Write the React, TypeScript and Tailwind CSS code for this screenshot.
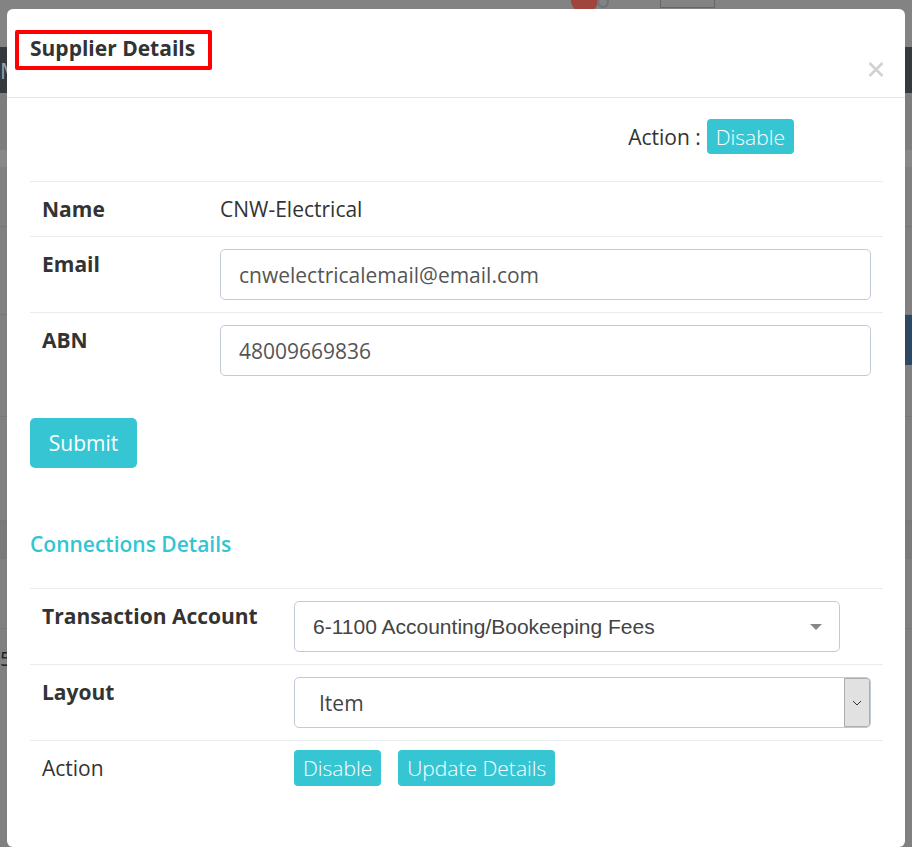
import React from "react";

const font = { fontFamily: '"Open Sans", "Noto Sans", sans-serif' };

function TealBtn({ children, className = "" }: { children: React.ReactNode; className?: string }) {
  return (
    <span
      className={`inline-flex items-center justify-center bg-[#36c6d3] text-white text-[21px] leading-[30px] rounded-[4px] ${className}`}
    >
      {children}
    </span>
  );
}

export default function App() {
  return (
    <div className="relative w-[912px] h-[847px] overflow-hidden bg-[#808080]" style={font}>
      {/* dimmed page behind the modal */}
      <div className="flex flex-col w-full">
        <div className="relative h-[47px] bg-[#838383]">
          <div className="absolute left-[571px] top-[-13px] w-[27px] h-[26px] rounded-full bg-[#9f453d]" />
          <div className="absolute left-[597px] top-[-4px] w-[12px] h-[12px] rounded-full border-2 border-[#6d7479]" />
          <div className="absolute left-[660px] top-[-2px] w-[55px] h-[10px] border border-[#666] border-t-0" />
        </div>
        <div className="h-[46px] bg-[#35393d] text-[#9aa0a6] text-[22px] leading-[46px] pl-0">M</div>
        <div className="h-[57px] bg-[#7d7d7d]" />
        <div className="h-[17px] bg-[#888888]" />
        <div className="h-[60px] bg-[#808080] border-b border-[#777]" />
        <div className="h-[88px] bg-[#808080] border-b border-[#777]" />
        <div className="flex h-[50px]">
          <div className="flex-1 bg-[#808080]" />
          <div className="w-[120px] bg-[#2c4863]" />
        </div>
        <div className="h-[52px] bg-[#808080] border-b border-[#777]" />
        <div className="h-[104px] bg-[#808080] border-b border-[#777]" />
        <div className="h-[38px] bg-[#7a7a7a]" />
        <div className="h-[70px] bg-[#808080] border-b border-[#777]" />
        <div className="h-[60px] bg-[#808080] text-[#222] text-[20px] leading-[60px]">5</div>
      </div>

      {/* modal */}
      <div className="absolute left-[7px] top-[9px] w-[898px] h-[838px] bg-white rounded-[6px] text-[#333]">
        {/* header */}
        <div className="relative h-[89px] border-b border-[#e5e5e5] pt-[21px] pl-[8px]">
          <div className="w-[197px] h-[40px] border-[4px] border-[#ff0000] rounded-[2px] pl-[11px] pb-[4px] flex items-center">
            <span className="text-[21px] font-bold leading-[26px] text-[#333] whitespace-nowrap">
              Supplier Details
            </span>
          </div>
          <svg
            className="absolute left-[861px] top-[53px]"
            width="16"
            height="15"
            viewBox="0 0 16 15"
          >
            <path d="M1.5 1 L14.5 14 M14.5 1 L1.5 14" stroke="#d2d2d2" strokeWidth="2.6" />
          </svg>
        </div>

        {/* body */}
        <div className="px-[23px] pr-[22px]">
          <div className="flex justify-end items-center pr-[89px] pt-[21px]">
            <span className="text-[21px] leading-[30px] mr-[6px]">Action :</span>
            <TealBtn className="h-[35px] px-[9px] font-light">Disable</TealBtn>
          </div>

          <table className="w-full mt-[27px] border-collapse text-[21px] leading-[30px]">
            <tbody>
              <tr className="border-t border-[#e7ecf1]">
                <td className="w-[178px] px-[12px] py-[12px] font-bold align-top">Name</td>
                <td className="px-[12px] py-[12px] align-top">CNW-Electrical</td>
              </tr>
              <tr className="border-t border-[#e7ecf1]">
                <td className="w-[178px] px-[12px] py-[12px] font-bold align-top">Email</td>
                <td className="px-[12px] py-[12px] align-top">
                  <div className="h-[51px] border border-[#c2cad8] rounded-[5px] pl-[18px] flex items-center text-[#555]">
                    cnwelectricalemail@email.com
                  </div>
                </td>
              </tr>
              <tr className="border-t border-[#e7ecf1]">
                <td className="w-[178px] px-[12px] py-[12px] font-bold align-top">ABN</td>
                <td className="px-[12px] py-[12px] align-top">
                  <div className="h-[51px] border border-[#c2cad8] rounded-[5px] pl-[18px] flex items-center text-[#555]">
                    48009669836
                  </div>
                </td>
              </tr>
            </tbody>
          </table>

          <div className="mt-[30px]">
            <TealBtn className="w-[107px] h-[50px] rounded-[5px]">Submit</TealBtn>
          </div>

          <div className="mt-[61px] text-[21px] leading-[30px] font-semibold text-[#32c5d2]">
            Connections Details
          </div>

          <table className="w-full mt-[29px] border-collapse text-[21px] leading-[30px]">
            <tbody>
              <tr className="border-t border-[#e7ecf1]">
                <td className="w-[252px] px-[12px] py-[12px] font-bold align-top whitespace-nowrap">
                  Transaction Account
                </td>
                <td className="px-[12px] py-[12px] align-top">
                  <div className="relative w-[546px] h-[51px] border border-[#c2cad8] rounded-[5px] pl-[18px] flex items-center text-[#444]">
                    <span style={{ fontFamily: '"Liberation Sans", Arial, sans-serif' }}>
                      6-1100 Accounting/Bookeeping Fees
                    </span>
                    <span className="absolute right-[17px] top-[22px] w-0 h-0 border-l-[6px] border-r-[6px] border-t-[6px] border-l-transparent border-r-transparent border-t-[#888]" />
                  </div>
                </td>
              </tr>
              <tr className="border-t border-[#e7ecf1]">
                <td className="w-[252px] px-[12px] py-[12px] font-bold align-top">Layout</td>
                <td className="px-[12px] py-[12px] align-top">
                  <div className="flex h-[51px] border border-[#c2cad8] rounded-[5px] overflow-hidden">
                    <div className="flex-1 pl-[24px] flex items-center text-[#444]">Item</div>
                    <div className="w-[26px] bg-[#e1e1e1] border border-[#adadad] rounded-r-[3px] flex items-center justify-center">
                      <svg width="10" height="6" viewBox="0 0 10 6">
                        <path d="M1 1 L5 5 L9 1" stroke="#333" strokeWidth="1" fill="none" />
                      </svg>
                    </div>
                  </div>
                </td>
              </tr>
              <tr className="border-t border-[#e7ecf1]">
                <td className="w-[252px] px-[12px] py-[12px] align-middle">Action</td>
                <td className="px-[12px] py-[9px] align-middle">
                  <div className="flex gap-[17px]">
                    <TealBtn className="h-[36px] px-[9px] font-light">Disable</TealBtn>
                    <TealBtn className="h-[36px] px-[9px] font-light">Update Details</TealBtn>
                  </div>
                </td>
              </tr>
            </tbody>
          </table>
        </div>
      </div>
    </div>
  );
}
